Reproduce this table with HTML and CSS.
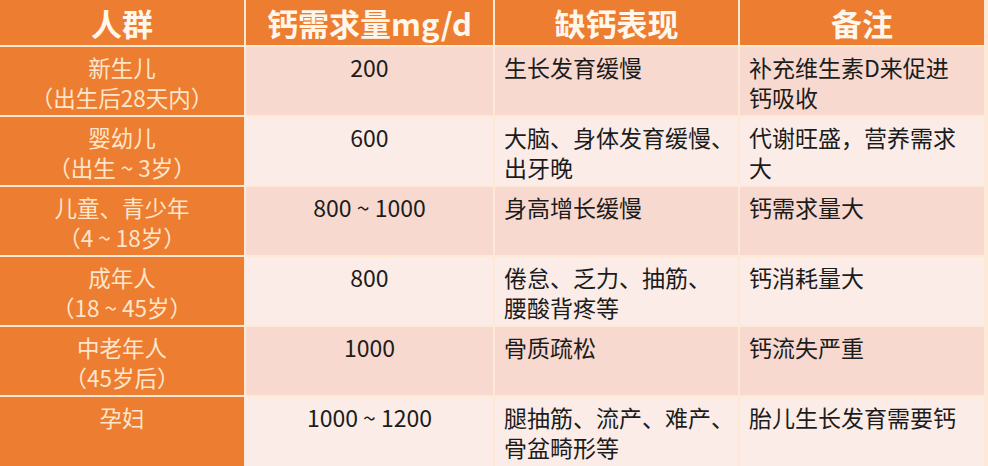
FILE: index.html
```html
<!DOCTYPE html>
<html lang="zh-CN">
<head>
<meta charset="utf-8">
<title>人群钙需求量</title>
<link rel="stylesheet" href="styles.css">
</head>
<body>
<div class="table">
  <div class="th">人群</div>
  <div class="th">钙需求量mg/d</div>
  <div class="th">缺钙表现</div>
  <div class="th">备注</div>

  <div class="group">新生儿<br>（出生后28天内）</div>
  <div class="cell num band1">200</div>
  <div class="cell band1">生长发育缓慢</div>
  <div class="cell band1">补充维生素D来促进<br>钙吸收</div>

  <div class="group">婴幼儿<br>（出生 ~ 3岁）</div>
  <div class="cell num band2">600</div>
  <div class="cell band2">大脑、身体发育缓慢、<br>出牙晚</div>
  <div class="cell band2">代谢旺盛，营养需求<br>大</div>

  <div class="group">儿童、青少年<br>（4 ~ 18岁）</div>
  <div class="cell num band1">800 ~ 1000</div>
  <div class="cell band1">身高增长缓慢</div>
  <div class="cell band1">钙需求量大</div>

  <div class="group">成年人<br>（18 ~ 45岁）</div>
  <div class="cell num band2">800</div>
  <div class="cell band2">倦怠、乏力、抽筋、<br>腰酸背疼等</div>
  <div class="cell band2">钙消耗量大</div>

  <div class="group">中老年人<br>（45岁后）</div>
  <div class="cell num band1">1000</div>
  <div class="cell band1">骨质疏松</div>
  <div class="cell band1">钙流失严重</div>

  <div class="group">孕妇</div>
  <div class="cell num band2">1000 ~ 1200</div>
  <div class="cell band2">腿抽筋、流产、难产、<br>骨盆畸形等</div>
  <div class="cell band2">胎儿生长发育需要钙</div>
</div>
</body>
</html>
```

FILE: styles.css
```css
html, body {
  margin: 0;
  padding: 0;
  background: #fdeee4;
}

.table {
  width: 988px;
  height: 466px;
  box-sizing: border-box;
  padding-right: 4px;
  display: grid;
  grid-template-columns: 244px 247px 243px 244px;
  grid-template-rows: 45px repeat(5, 68px) 69px;
  gap: 2px;
  background: #fde9d6;
  font-family: "Noto Sans CJK SC", "Noto Sans", sans-serif;
  overflow: hidden;
}

.th {
  background: #ed7d31;
  color: #fff6ec;
  font-weight: 700;
  font-size: 31px;
  line-height: 45px;
  text-align: center;
  white-space: nowrap;
}

.group {
  background: #ed7d31;
  color: #fde6cb;
  font-size: 22.5px;
  line-height: 30px;
  text-align: center;
  padding-top: 5px;
  white-space: nowrap;
}

.cell {
  color: #1c1c1c;
  font-size: 23px;
  line-height: 30px;
  padding: 5px 0 0 9px;
  white-space: nowrap;
}

.num {
  text-align: center;
  padding-left: 0;
}

.band1 {
  background: #f7d9cf;
}

.band2 {
  background: #fbece7;
}
```
